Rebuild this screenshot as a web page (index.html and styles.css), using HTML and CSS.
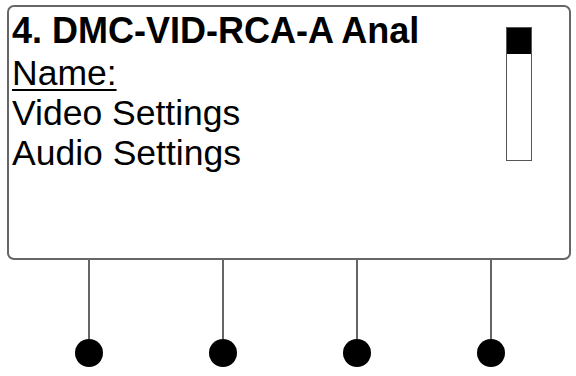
FILE: index.html
```html
<!DOCTYPE html>
<html>
<head>
<meta charset="utf-8">
<link rel="stylesheet" href="styles.css">
</head>
<body>
<div class="device">
  <div class="screen">
    <div class="menu">
      <div class="title">4. DMC-VID-RCA-A Anal</div>
      <div class="item name">Name:</div>
      <div class="item">Video Settings</div>
      <div class="item">Audio Settings</div>
    </div>
    <div class="scrollbar"><div class="thumb"></div></div>
  </div>
  <div class="keys">
    <div class="key"><div class="stem"></div><div class="dot"></div></div>
    <div class="key"><div class="stem"></div><div class="dot"></div></div>
    <div class="key"><div class="stem"></div><div class="dot"></div></div>
    <div class="key"><div class="stem"></div><div class="dot"></div></div>
  </div>
</div>
</body>
</html>
```
FILE: styles.css
```css
html, body {
  margin: 0;
  padding: 0;
  background: #fff;
}
body {
  width: 576px;
  height: 376px;
  overflow: hidden;
  font-family: "Liberation Sans", Arial, sans-serif;
  color: #000;
}
.device {
  display: flex;
  flex-direction: column;
}
.screen {
  margin: 5px 5px 0 7px;
  height: 251px;
  border: 2px solid #666;
  border-radius: 7px;
  display: flex;
  flex-direction: row;
  box-sizing: content-box;
}
.menu {
  flex: 1;
  padding: 2px 0 0 3px;
}
.title {
  font-weight: bold;
  font-size: 36px;
  line-height: 44px;
  white-space: nowrap;
}
.item {
  font-size: 35.5px;
  line-height: 40px;
  white-space: nowrap;
}
.name {
  text-decoration: underline;
  text-decoration-thickness: 2px;
  text-underline-offset: 4px;
}
.scrollbar {
  margin: 20px 37px 0 0;
  width: 24px;
  height: 132px;
  border: 1.5px solid #555;
  display: flex;
  flex-direction: column;
}
.thumb {
  height: 26px;
  background: #000;
}
.keys {
  display: flex;
  flex-direction: row;
  padding-left: 75px;
  gap: 106px;
}
.key {
  width: 28px;
  display: flex;
  flex-direction: column;
  align-items: center;
}
.stem {
  width: 2px;
  height: 79px;
  background: #666;
}
.dot {
  width: 28px;
  height: 28px;
  border-radius: 50%;
  background: #000;
}
```
